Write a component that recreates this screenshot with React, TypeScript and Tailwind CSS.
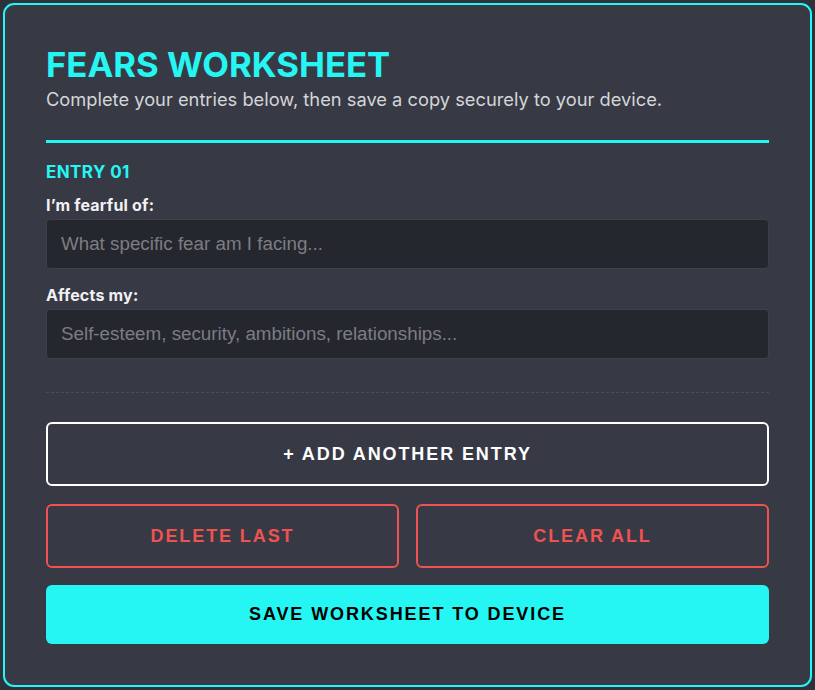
import { useState, ChangeEvent } from 'react'

type Entry = {
    fear: string,
    affects: string,
}

const emptyEntry = (): Entry => ({ fear: "", affects: "" })

const App = () => {
    const [entries, setEntries] = useState<Entry[]>([emptyEntry()])

    const update = (index: number, key: keyof Entry, value: string) => {
        setEntries(entries.map((entry, i) => i === index ? { ...entry, [key]: value } : entry))
    }

    return (
        <main className="min-h-screen bg-[#2e3139] p-[3px] font-['Inter','Noto_Sans',sans-serif]">
            <section className="rounded-[11px] border-2 border-[#25f6f4] bg-[#373a45] px-[41px] pt-[38px] pb-[41px]">
                <header className="border-b-[3px] border-[#25f6f4] pb-[27px]">
                    <h1 className="text-[34.7px] font-bold leading-[42px] text-[#25f6f4]">FEARS WORKSHEET</h1>
                    <p className="mt-px text-[18.3px] leading-[27px] text-[#d4d5d8]">
                        Complete your entries below, then save a copy securely to your device.
                    </p>
                </header>

                {entries.map((entry, index) => (
                    <div key={index} className="border-b border-dashed border-[#4b4e58] pt-[17px] pb-[33px]">
                        <h2 className="text-[17px] font-bold leading-[24px] tracking-[0.4px] text-[#25f6f4]">
                            ENTRY {String(index + 1).padStart(2, "0")}
                        </h2>
                        <label className="mt-[11px] block text-[16px] font-bold leading-[20px] tracking-[0.2px] text-[#f1f1f3]">
                            I’m fearful of:
                        </label>
                        <input
                            className="mt-[4px] block h-[50px] w-full rounded-[4px] border border-[#3d4049] bg-[#25272f] px-[14px] font-['Liberation_Sans',Arial,sans-serif] text-[18.8px] text-[#e5e5e5] outline-none placeholder:text-[#7c7d82]"
                            placeholder="What specific fear am I facing..."
                            value={entry.fear}
                            onChange={(event: ChangeEvent<HTMLInputElement>) => update(index, "fear", event.currentTarget.value)}
                        />
                        <label className="mt-[16px] block text-[16px] font-bold leading-[20px] tracking-[0.2px] text-[#f1f1f3]">
                            Affects my:
                        </label>
                        <input
                            className="mt-[4px] block h-[50px] w-full rounded-[4px] border border-[#3d4049] bg-[#25272f] px-[14px] font-['Liberation_Sans',Arial,sans-serif] text-[18.8px] text-[#e5e5e5] outline-none placeholder:text-[#7c7d82]"
                            placeholder="Self-esteem, security, ambitions, relationships..."
                            value={entry.affects}
                            onChange={(event: ChangeEvent<HTMLInputElement>) => update(index, "affects", event.currentTarget.value)}
                        />
                    </div>
                ))}

                <div className="mt-[29px] flex flex-col font-['Liberation_Sans',Arial,sans-serif] text-[18px] font-bold tracking-[1.9px]">
                    <button
                        className="h-[64px] w-full rounded-[6px] border-2 border-white text-white"
                        onClick={() => setEntries([...entries, emptyEntry()])}
                    >
                        + ADD ANOTHER ENTRY
                    </button>
                    <div className="mt-[18px] grid grid-cols-2 gap-[17px]">
                        <button
                            className="h-[64px] rounded-[6px] border-2 border-[#f05151] text-[#f05151]"
                            onClick={() => entries.length > 1 && setEntries(entries.slice(0, -1))}
                        >
                            DELETE LAST
                        </button>
                        <button
                            className="h-[64px] rounded-[6px] border-2 border-[#f05151] text-[#f05151]"
                            onClick={() => setEntries([emptyEntry()])}
                        >
                            CLEAR ALL
                        </button>
                    </div>
                    <button className="mt-[17px] h-[59px] w-full rounded-[6px] bg-[#25f6f4] text-black">
                        SAVE WORKSHEET TO DEVICE
                    </button>
                </div>
            </section>
        </main>
    )
}; export default App
